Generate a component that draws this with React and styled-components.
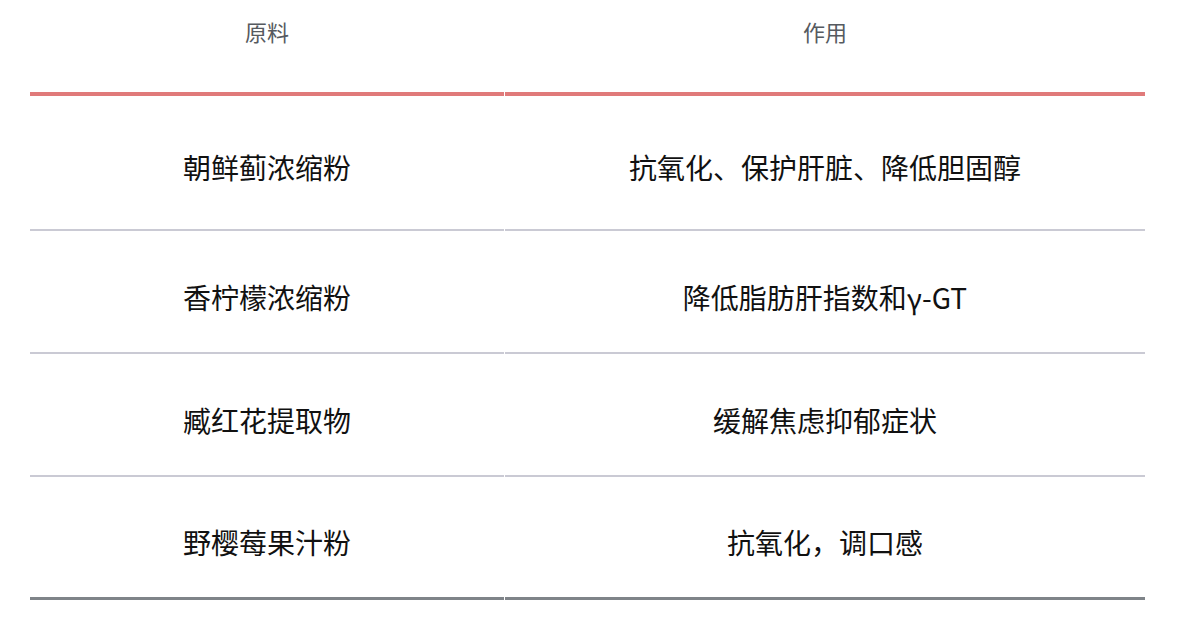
import React from "react";
import styled, { createGlobalStyle } from "styled-components";

const GlobalStyle = createGlobalStyle`
    html, body {
        margin: 0;
        padding: 0;
        background: #ffffff;
    }
    body {
        font-family: "Noto Sans CJK SC", "Noto Sans", sans-serif;
    }
`;

const Page = styled.div`
    padding: 0 0 0 30px;
`;

const Table = styled.div`
    display: grid;
    grid-template-columns: 474px 640px;
    column-gap: 1px;
    width: 1115px;
`;

const HeadCell = styled.div`
    height: 92px;
    display: flex;
    justify-content: center;
    align-items: flex-start;
    border-bottom: 4px solid #e07a7a;
    font-size: 22px;
    line-height: 30px;
    color: #565a60;
    span {
        margin-top: 16px;
    }
`;

const Cell = styled.div`
    height: ${props => props.h}px;
    display: flex;
    justify-content: center;
    align-items: flex-start;
    border-bottom: ${props => props.last ? "3px solid #7f8489" : "2px solid #cacad4"};
    font-size: 28px;
    line-height: 36px;
    color: #111111;
    span {
        margin-top: ${props => props.offset - 18}px;
    }
`;

const rows = [
    { name: "朝鲜蓟浓缩粉", use: "抗氧化、保护肝脏、降低胆固醇", h: 133, offset: 71 },
    { name: "香柠檬浓缩粉", use: "降低脂肪肝指数和γ-GT", h: 121, offset: 66 },
    { name: "臧红花提取物", use: "缓解焦虑抑郁症状", h: 121, offset: 66 },
    { name: "野樱莓果汁粉", use: "抗氧化，调口感", h: 120, offset: 65 },
];

export default function App() {
    return (
        <>
            <GlobalStyle />
            <Page>
                <Table>
                    <HeadCell><span>原料</span></HeadCell>
                    <HeadCell><span>作用</span></HeadCell>
                    {rows.map((row, i) => (
                        <React.Fragment key={row.name}>
                            <Cell h={row.h} offset={row.offset} last={i === rows.length - 1}>
                                <span>{row.name}</span>
                            </Cell>
                            <Cell h={row.h} offset={row.offset} last={i === rows.length - 1}>
                                <span>{row.use}</span>
                            </Cell>
                        </React.Fragment>
                    ))}
                </Table>
            </Page>
        </>
    );
}
